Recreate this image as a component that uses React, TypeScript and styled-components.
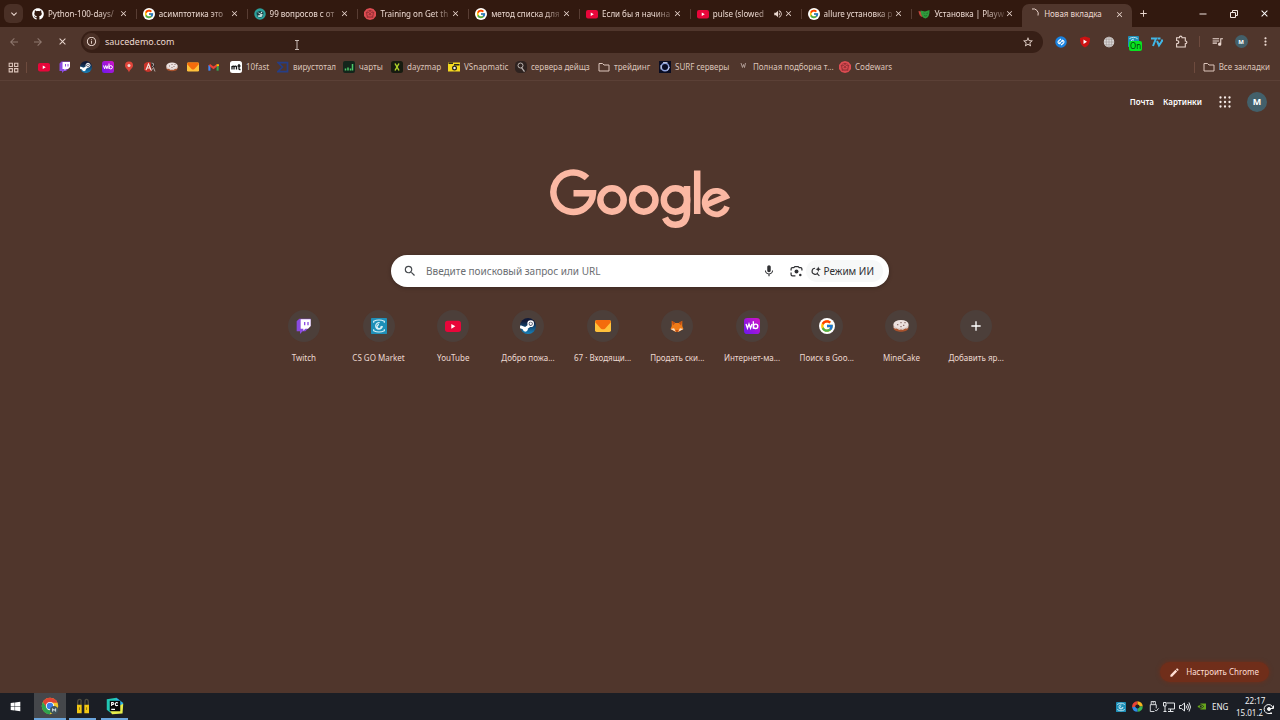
import React from "react";
import styled, { createGlobalStyle } from "styled-components";
import {
  MdArrowBack, MdArrowForward, MdClose, MdInfoOutline, MdStarOutline, MdMic, MdSearch, MdEdit,
  MdQueueMusic, MdMoreVert, MdOutlineGridView, MdVolumeUp, MdKeyboardArrowDown, MdAdd,
} from "react-icons/md";
import { FaGithub, FaWindows } from "react-icons/fa";
import { FcGoogle } from "react-icons/fc";

const GlobalStyle = createGlobalStyle`
  * { box-sizing: border-box; }
  body {
    margin: 0;
    background: #50362c;
    color: #ecd9d1;
    font: 8px/12px "Noto Sans", "Open Sans", sans-serif;
  }
  button, input { font: inherit; color: inherit; border: 0; padding: 0; margin: 0; background: none; outline: 0; }
  a { color: inherit; text-decoration: none; }
  svg { display: block; flex: none; }
`;

/* ---------- icons ---------- */

type IconProps = { size?: number };

const YouTube = ({ size = 12 }: IconProps) => (
  <svg width={size} height={size} viewBox="0 0 24 24">
    <rect x="0" y="4" width="24" height="17" rx="4" fill="#e8063a" />
    <path d="M9.500 9v7l6-3.500z" fill="#fff" />
  </svg>
);
const Twitch = ({ size = 12 }: IconProps) => (
  <svg width={size} height={size} viewBox="0 0 24 24">
    <path d="M5 1 1 5v15h5v4l4-4h4l8-8V1z" fill="#8a4be0" />
    <path d="M7 2h15v10l-4 4h-4l-3 3v-3H7z" fill="#fff" />
    <path d="M12 6h2v5h-2zM17 6h2v5h-2z" fill="#8a4be0" />
  </svg>
);
const Steam = ({ size = 12 }: IconProps) => (
  <svg width={size} height={size} viewBox="0 0 24 24">
    <defs>
      <linearGradient id="steam" x1="0" y1="0" x2="0" y2="1">
        <stop offset="0.2" stopColor="#101a38" />
        <stop offset="1" stopColor="#1683bd" />
      </linearGradient>
    </defs>
    <circle cx="12" cy="12" r="12" fill="url(#steam)" />
    <path d="m0 13 8 3 7-5" stroke="#fff" strokeWidth="4.5" fill="none" />
    <circle cx="16" cy="8.5" r="4" fill="#101a38" stroke="#fff" strokeWidth="2" />
    <circle cx="16" cy="8.5" r="2" fill="#fff" />
    <circle cx="8" cy="17" r="3.6" fill="#fff" />
  </svg>
);
const Wb = ({ size = 12 }: IconProps) => (
  <svg width={size} height={size} viewBox="0 0 24 24">
    <defs>
      <linearGradient id="wb" x1="1" y1="0" x2="0" y2="1">
        <stop offset="0" stopColor="#d413c4" />
        <stop offset="1" stopColor="#6a18f0" />
      </linearGradient>
    </defs>
    <rect width="24" height="24" rx="5" fill="url(#wb)" />
    <path d="m3 9 2.200 6.500L7.500 9l2.300 6.500L12 9M14 5v11" stroke="#fff" strokeWidth="2" fill="none" />
    <circle cx="17.500" cy="12.500" r="3.300" stroke="#fff" strokeWidth="2" fill="none" />
  </svg>
);
const Pin = () => (
  <svg width="12" height="12" viewBox="0 0 24 24">
    <path d="M12 1a8 8 0 0 0-8 8c0 5 6 7 8 14 2-7 8-9 8-14a8 8 0 0 0-8-8z" fill="#e0453a" />
    <circle cx="12" cy="9" r="3" fill="#f3d9d5" />
  </svg>
);
const Ark = () => (
  <svg width="12" height="12" viewBox="0 0 24 24">
    <path d="M9 2a10 10 0 0 0-1 20l8-2L13 2z" fill="#c9342a" />
    <path d="M14 2a10 10 0 0 1 8 9l-6 4z" fill="#37302e" />
    <path d="m4 18 5-12 5 12M6 14h6" stroke="#f1e5df" strokeWidth="2.200" fill="none" />
    <path d="M15 4q6 0 4 5-1 2-3 2M14 20l5-7 3 8" stroke="#b9aeaa" strokeWidth="1.800" fill="none" />
  </svg>
);
const Cake = ({ size = 12 }: IconProps) => (
  <svg width={size} height={size} viewBox="0 0 24 24">
    <path d="M1 10v6c2 6 20 6 22 0v-6z" fill="#a9522d" />
    <ellipse cx="12" cy="10" rx="11.500" ry="7" fill="#ece1df" />
    <path d="M1 11v4l3 1 2-1 3 3 3-1 3 1 3-3 3 1 2-2v-3c-3 6-19 6-22 0z" fill="#d8cbc8" />
    <path d="M6 9h2v2H6zM11 6h2v2h-2zM15 10h2v2h-2zM17 6h2v2h-2zM11 12h2v2h-2z" fill="#8d706b" />
  </svg>
);
const Mail = ({ size = 12 }: IconProps) => (
  <svg width={size} height={size} viewBox="0 0 24 24">
    <rect y="3" width="24" height="18" rx="2.500" fill="#ffc13b" />
    <path d="M2 3h20l2 3-9 10q-3 2-6 0L0 6z" fill="#f46b0c" />
  </svg>
);
const Gmail = () => (
  <svg width="11" height="12" viewBox="0 0 24 24">
    <path d="M3 20V8" stroke="#4285f4" strokeWidth="4.500" />
    <path d="M21 20V8" stroke="#34a853" strokeWidth="4.500" />
    <path d="m3 7 9 7 9-7" stroke="#ea4335" strokeWidth="4.500" fill="none" />
    <path d="M19 6h5v4h-5z" fill="#fbbc04" />
  </svg>
);
const Mt = () => (
  <svg width="12" height="12" viewBox="0 0 24 24">
    <rect width="24" height="24" rx="5" fill="#fff" />
    <path d="M4 17v-7m0 2c2-3 4-2 4 0v5m0-5c2-3 5-2 5 0v5M18 6v10q0 1.500 3 1M15 10h6" stroke="#111" strokeWidth="2.600" fill="none" />
  </svg>
);
const Sigma = () => (
  <svg width="12" height="12" viewBox="0 0 24 24">
    <path d="M2 3h19v18H2l9-9z" fill="none" stroke="#263e85" strokeWidth="3.500" />
  </svg>
);
const Chart = () => (
  <svg width="12" height="12" viewBox="0 0 24 24">
    <rect width="24" height="24" rx="4" fill="#13251b" />
    <path d="M5 19v-4M10 19v-6M15 19v-4M19 19V6" stroke="#4ecb6a" strokeWidth="3" />
  </svg>
);
const DayZ = () => (
  <svg width="12" height="12" viewBox="0 0 24 24">
    <rect width="24" height="24" rx="5" fill="#171b10" />
    <path d="m8 5 8 14M16 5 8 19" stroke="#b1d429" strokeWidth="3" />
  </svg>
);
const Camera = () => (
  <svg width="12" height="12" viewBox="0 0 24 24">
    <path d="M0 3h24v18H0z" fill="#f5d91f" />
    <path d="M1 3h9v3H1zM12 6h11v3H12z" fill="#2b2a1d" />
    <circle cx="13" cy="14" r="5" fill="#221f18" />
    <circle cx="13" cy="14" r="2.500" fill="#eee" />
  </svg>
);
const Lens = () => (
  <svg width="12" height="12" viewBox="0 0 24 24">
    <rect width="24" height="24" rx="9" fill="#2f2320" />
    <circle cx="11" cy="9" r="5" fill="none" stroke="#bcb4b1" strokeWidth="2" />
    <path d="m13 13 6 8" stroke="#bcb4b1" strokeWidth="2.500" />
  </svg>
);
const Surf = () => (
  <svg width="12" height="12" viewBox="0 0 24 24">
    <rect width="24" height="24" fill="#090c22" />
    <circle cx="12" cy="12" r="7.500" fill="none" stroke="#8d9fd9" strokeWidth="3" />
    <path d="M8 3h9M4 8v9M17 19l4-7" stroke="#e3e7f6" strokeWidth="1.500" />
  </svg>
);
const Wolf = () => (
  <svg width="12" height="12" viewBox="0 0 24 24">
    <path d="m8 4 3 9 2-6 2 6 2-9" stroke="#b7a49d" strokeWidth="1.800" fill="none" />
  </svg>
);
const Codewars = () => (
  <svg width="12" height="12" viewBox="0 0 24 24">
    <path d="m12 0 7 2 5 6v8l-5 6-7 2-7-2-5-6V8l5-6z" fill="#dd4c52" />
    <circle cx="12" cy="12" r="7.500" fill="none" stroke="#8b2b31" strokeWidth="1.300" />
    <path d="m12 4 2 5 6 0-4 4 2 6-6-3-6 3 2-6-4-4h6z" fill="none" stroke="#8b2b31" strokeWidth="1.300" />
    <circle cx="12" cy="12" r="2" fill="#8b2b31" />
  </svg>
);
const Folder = () => (
  <svg width="12" height="12" viewBox="0 0 24 24" fill="none" stroke="#dcc5bb" strokeWidth="2">
    <path d="M2 20V5h7l3 3h10v12z" />
  </svg>
);
const Puzzle = () => (
  <svg width="13" height="13" viewBox="0 0 24 24" fill="none" stroke="#ecd9d1" strokeWidth="2">
    <path d="M3 5h5q0-3 2.500-3T13 5h6v6q3 0 3 2.500T19 16v6H3v-6q4 0 4-3t-4-3z" />
  </svg>
);
const AppsGrid = () => (
  <svg width="12" height="12" viewBox="0 0 24 24" stroke="#f6ebe7" strokeWidth="4.600" strokeLinecap="round">
    <path d="M3 3h.01M12 3h.01M21 3h.01M3 12h.01M12 12h.01M21 12h.01M3 21h.01M12 21h.01M21 21h.01" />
  </svg>
);
const GoogleDisc = ({ size = 12 }: IconProps) => (
  <Disc $size={size}><FcGoogle size={size - 2} /></Disc>
);
const Owl = () => (
  <svg width="12" height="12" viewBox="0 0 24 24">
    <circle cx="12" cy="12" r="11.500" fill="#2b9e99" />
    <path d="M5 9q7-6 14 0l-1 7q-6 6-12 0z" fill="#163f43" />
    <path d="m6 8 12 5-3 5H9l-2-3 6-1z" fill="#bfe1dd" />
    <circle cx="15" cy="9" r="1.500" fill="#d7efec" />
  </svg>
);
const Masks = () => (
  <svg width="12" height="12" viewBox="0 0 24 24">
    <path d="m1 6 9 2-1 10Q2 17 1 6z" fill="#c9473e" />
    <path d="m5 5 9 2 9-3q1 14-8 17Q6 20 5 5z" fill="#2f9a3c" />
    <path d="m11 10 2 1M17 11l3-1M12 15q3 2 6 0" stroke="#1d6b28" strokeWidth="1.600" fill="none" />
  </svg>
);
const Spinner = () => (
  <svg width="12" height="12" viewBox="0 0 24 24">
    <path d="M8 2a10 10 0 0 1 12 13" fill="none" stroke="#e8d2c9" strokeWidth="2" />
  </svg>
);
const Market = ({ size = 12 }: IconProps) => (
  <svg width={size} height={size} viewBox="0 0 24 24">
    <rect width="24" height="24" rx="1" fill="#1e8fb8" />
    <path d="M4 7V5q4-2 8-2t8 2v2M4 17v2q4 2 8 2t8-2v-2M17 12a5 5 0 1 1-4-5M15 12a3 3 0 1 1-3-2" fill="none" stroke="#d8f0f8" strokeWidth="1.800" />
  </svg>
);
const Fox = ({ size = 12 }: IconProps) => (
  <svg width={size} height={size} viewBox="0 0 24 24">
    <path d="m3 3 6 4h6l6-4v9l2 5-8 5H9l-8-5 2-5z" fill="#ef7b17" />
    <path d="m1 17 6-1 3 6zM23 17l-6-1-3 6z" fill="#f6dcc0" />
    <path d="m3 3 6 4-4 4zM21 3l-6 4 4 4zM9 19h6l-2 3h-2z" fill="#c04f14" />
  </svg>
);
const Shazam = () => (
  <svg width="12" height="12" viewBox="0 0 24 24">
    <circle cx="12" cy="12" r="11.500" fill="#1a83e0" />
    <path d="M10 16c-5-1-5-5-2-7l4-3M14 8c5 1 5 5 2 7l-4 3M10 16l-1-3M14 8l1 3M9 12l3 2M15 12l-3-2" fill="none" stroke="#fff" strokeWidth="2.200" />
  </svg>
);
const Shield = () => (
  <svg width="12" height="12" viewBox="0 0 24 24">
    <path d="m12 1 10 3q1 14-10 19Q1 18 2 4z" fill="#cb1212" />
    <path d="M9 7v9l7-4.500z" fill="#fff" />
  </svg>
);
const Globe = () => (
  <svg width="12" height="12" viewBox="0 0 24 24" fill="none" stroke="#948b88" strokeWidth="1">
    <circle cx="12" cy="12" r="10.500" fill="#dad7d6" stroke="none" />
    <path d="M12 2v20M2 12h20M4 6.500h16M4 17.500h16" />
    <ellipse cx="12" cy="12" rx="5.500" ry="10" />
  </svg>
);
const Seven = () => (
  <svg width="12" height="12" viewBox="0 0 24 24">
    <path d="M0 5h10L4 20M13 5h6M22 7v4M12 10l4 9 6-9" fill="none" stroke="#41b6e6" strokeWidth="4" />
  </svg>
);
const LensSearch = () => (
  <svg width="13" height="13" viewBox="0 0 24 24" fill="none" stroke="#303134" strokeWidth="2.300">
    <path d="M2 10V7.500Q2 5 4.500 5H7l2-2h6l2 2h2.500Q22 5 22 7.500V10M2 14v3.500Q2 20 4.500 20H10" />
    <circle cx="12" cy="12" r="3.600" fill="#303134" stroke="none" />
    <circle cx="19" cy="18.500" r="2.300" fill="#303134" stroke="none" />
  </svg>
);
const AiSearch = () => (
  <svg width="11" height="11" viewBox="0 0 24 24">
    <path d="M11 5a6.500 6.500 0 1 0 6 9M14.500 15.500l6 6" fill="none" stroke="#303134" strokeWidth="2.500" />
    <path d="m18 1 1.800 4.200L24 7l-4.200 1.800L18 13l-1.800-4.200L12 7l4.200-1.800z" fill="#303134" />
  </svg>
);
const GoogleLogo = () => (
  <svg width="180" height="60" viewBox="549 169 180 60" fill="none" stroke="#fbb8a3" strokeWidth="6.500" role="img" aria-label="Google">
    <path d="M586 178A19.800 19.800 0 1 0 592 193.200H572.500" />
    <circle cx="611" cy="200" r="11.700" />
    <circle cx="642.800" cy="200" r="11.700" />
    <circle cx="674.500" cy="200" r="11.700" />
    <path d="M686 186v25q0 13.700-11.500 13.700-7.500 0-10.500-7" />
    <path d="M696.200 170.500V214" />
    <path d="m705 205 20-8.500a11.500 11.700 0 1 0 1 10" strokeWidth="5.800" />
  </svg>
);
const Chrome = () => (
  <svg width="18" height="18" viewBox="0 0 24 24">
    <circle cx="12" cy="12" r="11" fill="#f4c52c" />
    <path d="M2.500 6.500a11 11 0 0 1 19.500 1H12l-4.500 7z" fill="#df4535" />
    <path d="M2.500 6.500a11 11 0 0 0 9 16.500l4-7-8-2z" fill="#2fa34f" />
    <circle cx="12" cy="12" r="5.500" fill="#fff" />
    <circle cx="12" cy="12" r="4.300" fill="#3e7fe8" />
    <circle cx="17.500" cy="17.500" r="5.500" fill="#41545c" />
    <path d="M15.500 19.500v-4l2 2.500 2-2.500v4" stroke="#dbe6ea" strokeWidth="1.300" fill="none" />
  </svg>
);
const Locks = () => (
  <svg width="16" height="16" viewBox="0 0 24 24">
    <path d="M4 12V6q0-4 3-4t2 4v4M15 10V6q0-4 2-4 3 0 3 4v6" stroke="#4f4c3f" strokeWidth="2" fill="none" />
    <path d="M3 10h7v13H3zM14 10h7v13h-7z" fill="#f2c713" />
    <path d="M6 14h1v4H6zM17 14h1v4h-1z" fill="#6d5a12" />
  </svg>
);
const PyCharm = () => (
  <svg width="18" height="18" viewBox="0 0 24 24">
    <path d="M1 3 14 1l4 8-12 12-5-4z" fill="#21c7b4" />
    <path d="m14 1 9 7-3 9H9z" fill="#2fb5e8" />
    <path d="m23 9-1 13-14 1-3-5z" fill="#e8ee4b" />
    <path d="M5 5h14v14H5z" fill="#090909" />
    <path d="M7.500 12V7.500h2q2 1.200 0 2.500h-2M16 8q-3.500-1.500-3.500 1.500T16 11M7 16.500h5" stroke="#fff" strokeWidth="1.400" fill="none" />
  </svg>
);
const Swirl = () => (
  <svg width="11" height="11" viewBox="0 0 24 24" fill="none" strokeWidth="7">
    <path d="M4 14a8 8 0 0 1 8-10" stroke="#e84335" />
    <path d="M12 4a8 8 0 0 1 8 8" stroke="#f6b51e" />
    <path d="M20 12a8 8 0 0 1-8 8" stroke="#36b455" />
    <path d="M12 20a8 8 0 0 1-8-7" stroke="#2d8be8" />
    <circle cx="12" cy="12" r="4" fill="#1b1e25" stroke="none" />
  </svg>
);
const Usb = () => (
  <svg width="11" height="11" viewBox="0 0 24 24" fill="none" stroke="#e4e6e9" strokeWidth="2">
    <path d="M7 8V1h9v7M5 8h13v8M5 8v15h9M15 19l3 3 5-6M10 4h3" />
  </svg>
);
const Network = () => (
  <svg width="12" height="12" viewBox="0 0 24 24" fill="none" stroke="#e4e6e9" strokeWidth="2">
    <path d="M7 4h16v12H10M15 16v5M10 21h11M1 3h5v7H1zM4 10v11M1 21h6" />
  </svg>
);
const Speaker = () => (
  <svg width="12" height="12" viewBox="0 0 24 24" fill="none" stroke="#e4e6e9" strokeWidth="2">
    <path d="M1 9h4l6-5v16l-6-5H1zM14 9q2 3 0 6M17 6q4 6 0 12M20 3q6 9 0 18" />
  </svg>
);
const Nvidia = () => (
  <svg width="9" height="9" viewBox="0 0 24 24">
    <path d="M9 4h15v16H9z" fill="#67a51b" />
    <path d="M0 12q9-10 18 0-9 10-18 0z" fill="#67a51b" stroke="#1b1e25" strokeWidth="2" />
    <circle cx="10" cy="12" r="2.500" fill="#1b1e25" />
  </svg>
);
const Notification = () => (
  <svg width="12" height="12" viewBox="0 0 24 24" fill="none" stroke="#f5f5f5" strokeWidth="2">
    <path d="M20 10a9 9 0 1 0-3 9M21 5v6h-6M12 21h6" />
    <circle cx="12" cy="12" r="3" fill="#f5f5f5" />
  </svg>
);
const Restore = () => (
  <svg width="8" height="8" viewBox="0 0 16 16" fill="none" stroke="#f2e6e1" strokeWidth="2">
    <path d="M1 5h10v10H1zM5 5V1h10v10h-4" />
  </svg>
);
const Minimize = () => (
  <svg width="8" height="8" viewBox="0 0 16 16" stroke="#f2e6e1" strokeWidth="2"><path d="M1 8h14" /></svg>
);
const IBeam = () => (
  <svg width="6" height="10" viewBox="0 0 6 10" fill="none" stroke="#c9bbb5">
    <path d="M1 .5h4M3 .5v9M1 9.500h4" />
  </svg>
);

/* ---------- layout ---------- */

const Disc = styled.span<{ $size: number }>`
  width: ${(p) => p.$size}px;
  height: ${(p) => p.$size}px;
  display: grid;
  place-items: center;
  flex: none;
  border-radius: 50%;
  background: #fff;
`;
const Screen = styled.div`
  min-height: 100vh;
  display: flex;
  flex-direction: column;
`;
const TabStrip = styled.header`
  height: 27px;
  display: flex;
  background: #32190f;
`;
const TabSearch = styled.button`
  width: 19px;
  height: 19px;
  margin: 4px 3px 4px 4px;
  display: grid;
  place-items: center;
  border-radius: 6px;
  background: #4a3026;
`;
const Tabs = styled.div`
  flex: 1;
  min-width: 0;
  display: flex;
`;
const Tab = styled.div<{ $active?: boolean }>`
  flex: 1 1 0;
  min-width: 0;
  height: ${(p) => (p.$active ? "23px" : "27px")};
  margin-top: ${(p) => (p.$active ? "4px" : "0")};
  padding: 0 8px ${(p) => (p.$active ? "3px" : "0")} 6px;
  display: flex;
  align-items: center;
  gap: 4px;
  border-radius: 7px 7px 0 0;
  background: ${(p) => (p.$active ? "#50362c" : "transparent")};
`;
const TabTitle = styled.span<{ $fade?: boolean }>`
  flex: 1;
  min-width: 0;
  overflow: hidden;
  white-space: nowrap;
  mask-image: ${(p) => (p.$fade ? "linear-gradient(90deg, #000 75%, #0003)" : "none")};
`;
const TabClose = styled.button`
  width: 9px;
  height: 12px;
  margin-left: -3px;
  display: grid;
  place-items: center;
`;
const TabDivider = styled.span`
  width: 1px;
  height: 10px;
  align-self: center;
  background: #583d33;
`;
const WindowButtons = styled.div`
  width: 148px;
  display: flex;
  align-items: center;
`;
const WindowButton = styled.button`
  width: 31px;
  height: 27px;
  display: grid;
  place-items: center;
`;
const NewTab = styled(WindowButton)`
  width: 22px;
  margin-right: auto;
`;
const Toolbar = styled.div`
  height: 29px;
  padding: 0 3px 0 2px;
  display: flex;
  align-items: center;
`;
const ToolButton = styled.button<{ $dim?: boolean }>`
  position: relative;
  width: 24px;
  height: 22px;
  display: grid;
  place-items: center;
  opacity: ${(p) => (p.$dim ? 0.4 : 1)};
`;
const Divider = styled.span`
  width: 1px;
  height: 11px;
  margin: 0 5px 0 6px;
  flex: none;
  background: #6e4b3e;
`;
const Omnibox = styled.label`
  position: relative;
  flex: 1;
  height: 22px;
  margin: 0 6px 0 7px;
  padding: 0 9px 0 2px;
  display: flex;
  align-items: center;
  gap: 5px;
  border-radius: 11px;
  background: #371f16;
`;
const SiteInfo = styled.span`
  width: 17px;
  height: 17px;
  display: grid;
  place-items: center;
  border-radius: 50%;
  background: #4a3026;
`;
const Address = styled.input`
  flex: 1;
  min-width: 0;
  font-size: 9px;
`;
const Pointer = styled.span`
  position: absolute;
  left: 213px;
  top: 9px;
`;
const OnBadge = styled.span`
  position: absolute;
  left: 8px;
  top: 10px;
  width: 13px;
  height: 10px;
  border-radius: 2px;
  background: #08e420;
  color: #06420c;
  line-height: 10px;
  text-align: center;
`;
const Avatar = styled.span<{ $size: number }>`
  width: ${(p) => p.$size}px;
  height: ${(p) => p.$size}px;
  display: grid;
  place-items: center;
  border-radius: 50%;
  background: #43606a;
  color: #fff;
  font-size: ${(p) => (p.$size > 15 ? "9px" : "6px")};
  font-weight: 700;
`;
const BookmarksBar = styled.nav`
  height: 25px;
  padding: 0 10px 2px 7px;
  display: flex;
  align-items: center;
  border-bottom: 1px solid #5b4036;
  color: #dcc5bb;
`;
const QuickMarks = styled.div`
  display: grid;
  grid-template-columns: repeat(3, 21px 21px 22px);
  margin-left: 6px;
`;
const Bookmark = styled.a<{ $width?: number }>`
  width: ${(p) => (p.$width ? `${p.$width}px` : "auto")};
  display: flex;
  align-items: center;
  gap: 4px;
  flex: none;
  white-space: nowrap;
`;
const AllBookmarks = styled(Bookmark)`
  margin-left: 3px;
`;
const Spacer = styled.span`
  flex: 1;
`;
const Page = styled.main`
  flex: 1;
  display: flex;
  flex-direction: column;
  align-items: center;
`;
const PageHeader = styled.div`
  width: 100%;
  height: 41px;
  padding-right: 13px;
  display: flex;
  align-items: center;
  justify-content: flex-end;
  font-weight: 600;
  color: #fff;
`;
const HeaderLink = styled.a`
  margin-right: 9px;
`;
const AppsButton = styled.button`
  margin: 0 16px 0 8px;
`;
const Logo = styled.div`
  margin: 47px 0 26px;
`;
const SearchBox = styled.form`
  width: 498px;
  max-width: 90%;
  height: 32px;
  padding: 0 6px 0 12px;
  display: flex;
  align-items: center;
  border-radius: 16px;
  background: #fff;
  color: #303134;
  box-shadow: 0 1px 4px #0004;
`;
const SearchInput = styled.input`
  flex: 1;
  min-width: 0;
  margin-left: 9px;
  font-size: 10px;
  &::placeholder { color: #6b6e72; opacity: 1; }
`;
const SearchButton = styled.button`
  width: 27px;
  height: 24px;
  display: grid;
  place-items: center;
`;
const AiButton = styled.button`
  height: 22px;
  margin-left: -4px;
  padding: 0 9px 0 4px;
  display: flex;
  align-items: center;
  gap: 3px;
  border-radius: 11px;
  background: #f7f8f8;
  font-size: 10px;
`;
const Shortcuts = styled.nav`
  width: 747px;
  max-width: 100%;
  margin-top: 23px;
  display: grid;
  grid-template-columns: repeat(10, 1fr);
`;
const Shortcut = styled.a`
  display: flex;
  flex-direction: column;
  align-items: center;
  gap: 10px;
  white-space: nowrap;
`;
const ShortcutIcon = styled.span`
  width: 32px;
  height: 32px;
  display: grid;
  place-items: center;
  border-radius: 50%;
  background: #4c3f3a;
`;
const Customize = styled.button`
  height: 20px;
  margin: auto 11px 11px auto;
  padding: 0 10px 0 9px;
  display: flex;
  align-items: center;
  gap: 6px;
  border-radius: 10px;
  background: #702e1a;
  color: #ffdfd4;
  box-shadow: 0 0 4px #702e1a;
`;
const Taskbar = styled.footer`
  height: 27px;
  display: flex;
  background: #1b1e25;
  color: #f1f1f2;
`;
const TaskButton = styled.button<{ $active?: boolean; $running?: boolean }>`
  width: ${(p) => (p.$active ? "32px" : p.$running ? "27px" : "34px")};
  margin-right: ${(p) => (p.$running ? (p.$active ? "3px" : "5px") : "0")};
  padding-right: ${(p) => (p.$running ? "0" : "3px")};
  display: grid;
  place-items: center;
  background: ${(p) => (p.$active ? "#45474b" : "transparent")};
  border-bottom: ${(p) => (p.$running ? "2px solid #6ba5dc" : "0")};
`;
const Tray = styled.div`
  position: relative;
  margin-left: auto;
  padding-right: 6px;
  display: flex;
  align-items: center;
`;
const TrayIcon = styled.span`
  width: 16px;
  display: grid;
  place-items: center;
`;
const Language = styled.span`
  width: 24px;
  margin-left: 3px;
`;
const Clock = styled.time`
  width: 38px;
  display: flex;
  flex-direction: column;
  align-items: flex-start;
`;
const Hour = styled.span`
  padding-left: 9px;
`;
const TrayBadge = styled.span`
  position: absolute;
  right: 4px;
  bottom: 4px;
  padding: 1px;
  border-radius: 4px;
  background: #1b1e25;
`;

/* ---------- data ---------- */

const tabs = [
  { icon: <FaGithub size={12} color="#fff" />, title: "Python-100-days/" },
  { icon: <GoogleDisc />, title: "асимптотика это" },
  { icon: <Owl />, title: "99 вопросов с от" },
  { icon: <Codewars />, title: "Training on Get th" },
  { icon: <GoogleDisc />, title: "метод списка для" },
  { icon: <YouTube />, title: "Если бы я начина" },
  { icon: <YouTube />, title: "pulse (slowed", sound: true },
  { icon: <GoogleDisc />, title: "allure установка p" },
  { icon: <Masks />, title: "Установка | Playw" },
];
const quickMarks = [
  ["YouTube", <YouTube />], ["Twitch", <Twitch />], ["Steam", <Steam />], ["Wildberries", <Wb />],
  ["Maps", <Pin />], ["Ark", <Ark />], ["MineCake", <Cake />], ["Mail", <Mail />], ["Gmail", <Gmail />],
] as const;
const bookmarks = [
  { icon: <Mt />, title: "10fast", width: 47 },
  { icon: <Sigma />, title: "вирустотал", width: 66 },
  { icon: <Chart />, title: "чарты", width: 48 },
  { icon: <DayZ />, title: "dayzmap", width: 57 },
  { icon: <Camera />, title: "VSnapmatic", width: 67 },
  { icon: <Lens />, title: "сервера дейщз", width: 83 },
  { icon: <Folder />, title: "трейдинг", width: 61 },
  { icon: <Surf />, title: "SURF серверы", width: 78 },
  { icon: <Wolf />, title: "Полная подборка т...", width: 102 },
  { icon: <Codewars />, title: "Codewars", width: 52 },
];
const shortcuts = [
  { icon: <Twitch size={16} />, title: "Twitch" },
  { icon: <Market size={16} />, title: "CS GO Market" },
  { icon: <YouTube size={16} />, title: "YouTube" },
  { icon: <Steam size={16} />, title: "Добро пожа..." },
  { icon: <Mail size={16} />, title: "67 · Входящи..." },
  { icon: <Fox size={14} />, title: "Продать ски..." },
  { icon: <Wb size={16} />, title: "Интернет-ма..." },
  { icon: <GoogleDisc size={16} />, title: "Поиск в Goo..." },
  { icon: <Cake size={16} />, title: "MineCake" },
  { icon: <MdAdd size={16} color="#fff" />, title: "Добавить яр..." },
];

export default function App() {
  return (
    <Screen>
      <GlobalStyle />
      <TabStrip>
        <TabSearch aria-label="Поиск вкладок"><MdKeyboardArrowDown size={12} /></TabSearch>
        <Tabs>
          {tabs.map((t, i) => (
            <React.Fragment key={t.title}>
              <Tab>
                {t.icon}
                <TabTitle $fade>{t.title}</TabTitle>
                {t.sound && <MdVolumeUp size={10} />}
                <TabClose aria-label="Закрыть"><MdClose size={9} /></TabClose>
              </Tab>
              {i < tabs.length - 1 && <TabDivider />}
            </React.Fragment>
          ))}
          <Tab $active>
            <Spinner />
            <TabTitle>Новая вкладка</TabTitle>
            <TabClose aria-label="Закрыть"><MdClose size={9} /></TabClose>
          </Tab>
        </Tabs>
        <WindowButtons>
          <NewTab aria-label="Новая вкладка"><MdAdd size={11} /></NewTab>
          <WindowButton aria-label="Свернуть"><Minimize /></WindowButton>
          <WindowButton aria-label="Восстановить"><Restore /></WindowButton>
          <WindowButton aria-label="Закрыть окно"><MdClose size={11} color="#fff" /></WindowButton>
        </WindowButtons>
      </TabStrip>

      <Toolbar>
        <ToolButton $dim aria-label="Назад"><MdArrowBack size={12} /></ToolButton>
        <ToolButton $dim aria-label="Вперёд"><MdArrowForward size={12} /></ToolButton>
        <ToolButton aria-label="Остановить"><MdClose size={11} /></ToolButton>
        <Omnibox>
          <SiteInfo><MdInfoOutline size={11} /></SiteInfo>
          <Address aria-label="Адрес" defaultValue="saucedemo.com" />
          <MdStarOutline size={12} />
          <Pointer><IBeam /></Pointer>
        </Omnibox>
        <ToolButton aria-label="Shazam"><Shazam /></ToolButton>
        <ToolButton aria-label="Защита"><Shield /></ToolButton>
        <ToolButton aria-label="Сеть"><Globe /></ToolButton>
        <ToolButton aria-label="Маркет"><Market size={11} /><OnBadge>On</OnBadge></ToolButton>
        <ToolButton aria-label="7TV"><Seven /></ToolButton>
        <ToolButton aria-label="Расширения"><Puzzle /></ToolButton>
        <Divider />
        <ToolButton aria-label="Медиа"><MdQueueMusic size={13} /></ToolButton>
        <ToolButton aria-label="Профиль"><Avatar $size={13}>M</Avatar></ToolButton>
        <ToolButton aria-label="Меню"><MdMoreVert size={13} /></ToolButton>
      </Toolbar>

      <BookmarksBar>
        <MdOutlineGridView size={13} />
        <Divider />
        <QuickMarks>
          {quickMarks.map(([name, icon]) => (
            <Bookmark href="#" key={name} aria-label={name}>{icon}</Bookmark>
          ))}
        </QuickMarks>
        {bookmarks.map((b) => (
          <Bookmark href="#" key={b.title} $width={b.width}>{b.icon}{b.title}</Bookmark>
        ))}
        <Spacer />
        <Divider />
        <AllBookmarks href="#"><Folder />Все закладки</AllBookmarks>
      </BookmarksBar>

      <Page>
        <PageHeader>
          <HeaderLink href="#">Почта</HeaderLink>
          <HeaderLink href="#">Картинки</HeaderLink>
          <AppsButton aria-label="Приложения"><AppsGrid /></AppsButton>
          <Avatar $size={20}>M</Avatar>
        </PageHeader>
        <Logo><GoogleLogo /></Logo>
        <SearchBox>
          <MdSearch size={14} color="#45494d" />
          <SearchInput aria-label="Поиск" placeholder="Введите поисковый запрос или URL" />
          <SearchButton type="button" aria-label="Голосовой поиск"><MdMic size={14} /></SearchButton>
          <SearchButton type="button" aria-label="Поиск по картинке"><LensSearch /></SearchButton>
          <AiButton type="button"><AiSearch />Режим ИИ</AiButton>
        </SearchBox>
        <Shortcuts>
          {shortcuts.map((s) => (
            <Shortcut href="#" key={s.title}>
              <ShortcutIcon>{s.icon}</ShortcutIcon>
              {s.title}
            </Shortcut>
          ))}
        </Shortcuts>
        <Customize><MdEdit size={11} />Настроить Chrome</Customize>
      </Page>

      <Taskbar>
        <TaskButton aria-label="Пуск"><FaWindows size={11} color="#fff" /></TaskButton>
        <TaskButton $active $running aria-label="Chrome"><Chrome /></TaskButton>
        <TaskButton $running aria-label="Замки"><Locks /></TaskButton>
        <TaskButton $running aria-label="PyCharm"><PyCharm /></TaskButton>
        <Tray>
          <TrayIcon><Market size={10} /></TrayIcon>
          <TrayIcon><Swirl /></TrayIcon>
          <TrayIcon><Usb /></TrayIcon>
          <TrayIcon><Network /></TrayIcon>
          <TrayIcon><Speaker /></TrayIcon>
          <TrayIcon><Nvidia /></TrayIcon>
          <Language>ENG</Language>
          <Clock><Hour>22:17</Hour><span>15.01.2</span></Clock>
          <TrayBadge><Notification /></TrayBadge>
        </Tray>
      </Taskbar>
    </Screen>
  );
}
